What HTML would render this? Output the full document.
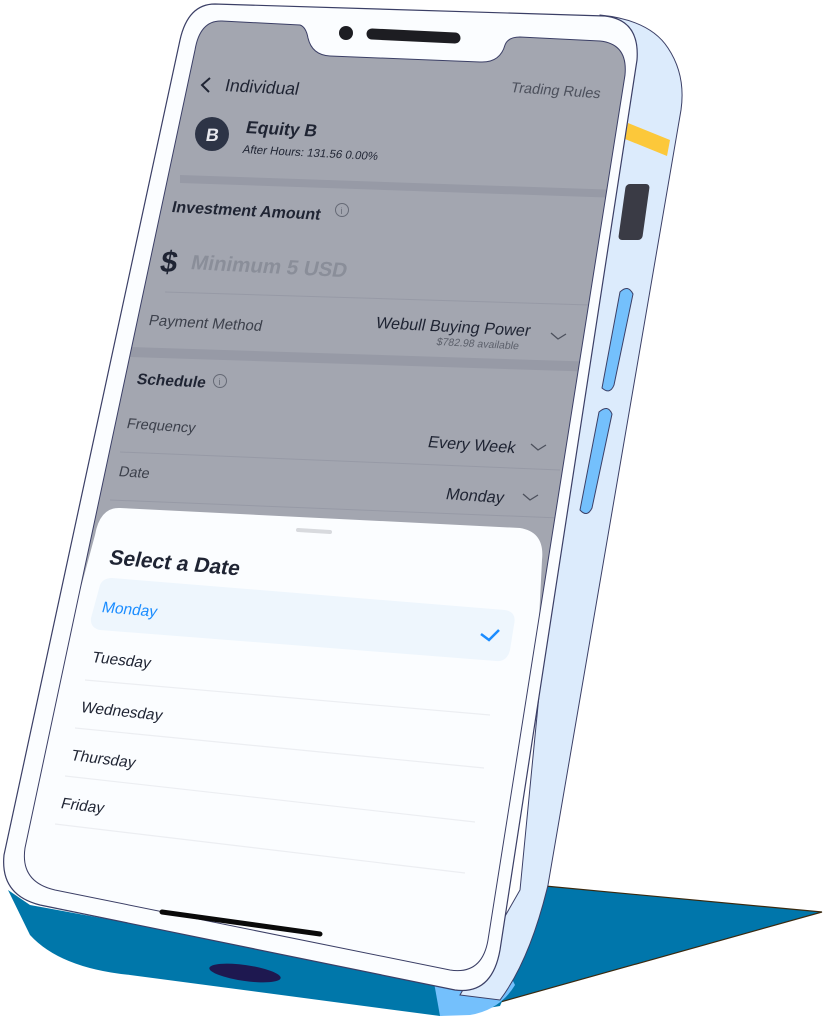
<!DOCTYPE html>
<html><head><meta charset="utf-8"><style>
html,body{margin:0;padding:0;background:#fff;}
svg{display:block;}
text{font-family:"Liberation Sans",sans-serif;}
</style></head><body>
<svg width="824" height="1018" viewBox="0 0 824 1018" xmlns="http://www.w3.org/2000/svg">
<polygon points="545,886 822,912 486,1006 470,960" fill="#0076ab"/>
<polyline points="545,886 822,912 486,1006" fill="none" stroke="#3a2a10" stroke-width="1.2"/>
<path d="M8,890 L30,935 Q60,968 130,975 L440,1016 L500,1006 L520,960 L470,985 L30,905 Z" fill="#0077aa"/>
<path d="M430,960 L500,955 L515,985 Q500,1010 470,1015 L440,1016 Z" fill="#74c0fc"/>
<path d="M600,15 Q650,20 668,48 Q686,75 681,110 L548,885 Q530,960 500,1000 L460,995 L520,890 L600,70 Z" fill="#dcebfc" stroke="#3b3f66" stroke-width="1"/>
<polygon points="628,123 670,140 667,156 625,139" fill="#fcc83a"/>
<rect x="622" y="184" width="24" height="56" rx="4" fill="#3a3b45" transform="skewX(-8)" transform-origin="634 212"/>
<path d="M620,292 Q628,284 633,294 L614,385 Q610,395 602,388 Z" fill="#74c0fc" stroke="#3b3f66" stroke-width="1"/>
<path d="M599,412 Q608,404 612,414 L592,508 Q587,518 580,510 Z" fill="#74c0fc" stroke="#3b3f66" stroke-width="1"/>
<path d="M215,4 L605,16 Q640,20 637,60 L500,950 Q492,995 455,990 L40,905 Q0,895 4,855 L180,40 Q188,4 215,4 Z" fill="#fbfdff" stroke="#3b3f66" stroke-width="1.2"/>
<clipPath id="scr"><path d="M222,21 L300,25 Q306,27 308,38 Q312,55 330,56 L480,62 Q500,63 505,45 Q508,37 520,37 L600,41 Q628,44 625,75 L488,940 Q482,975 450,970 L55,890 Q20,882 25,848 L195,50 Q200,20 222,21 Z"/></clipPath>
<g clip-path="url(#scr)">
<rect x="0" y="0" width="824" height="1018" fill="#a3a6b0"/>
<polygon points="180,175 620,190 620,198 180,183" fill="#979aa6"/>
<polygon points="130,347 600,362 600,372 130,357" fill="#979aa6"/>
<line x1="165" y1="292" x2="590" y2="305" stroke="#979aa6" stroke-width="1"/>
<line x1="120" y1="452" x2="560" y2="470" stroke="#979aa6" stroke-width="1"/>
<line x1="110" y1="500" x2="560" y2="518" stroke="#979aa6" stroke-width="1"/>
<path d="M120,508 L520,528 Q545,532 542,560 L520,1000 L-30,1000 L95,535 Q100,507 120,508 Z" fill="#fbfdff"/>
<path d="M100,585 Q103,578 112,578 L505,610 Q517,612 514,625 L510,650 Q507,662 496,661 L100,630 Q90,628 91,618 Z" fill="#eef6fd"/>
<line x1="85" y1="680" x2="490" y2="715" stroke="#eceef2" stroke-width="1.2"/>
<line x1="75" y1="728" x2="484" y2="768" stroke="#eceef2" stroke-width="1.2"/>
<line x1="65" y1="776" x2="475" y2="822" stroke="#eceef2" stroke-width="1.2"/>
<line x1="55" y1="824" x2="465" y2="873" stroke="#eceef2" stroke-width="1.2"/>
</g>
<path d="M222,21 L300,25 Q306,27 308,38 Q312,55 330,56 L480,62 Q500,63 505,45 Q508,37 520,37 L600,41 Q628,44 625,75 L488,940 Q482,975 450,970 L55,890 Q20,882 25,848 L195,50 Q200,20 222,21 Z" fill="none" stroke="#3b3f66" stroke-width="1"/>
<circle cx="346" cy="33" r="7" fill="#1d1d22"/>
<line x1="372" y1="34" x2="455" y2="38" stroke="#1d1d22" stroke-width="11" stroke-linecap="round"/>
<line x1="298" y1="530" x2="330" y2="532" stroke="#d8dade" stroke-width="4" stroke-linecap="round"/>
<line x1="162" y1="912" x2="320" y2="934" stroke="#0a0a0a" stroke-width="5" stroke-linecap="round"/>
<ellipse cx="245" cy="973" rx="36" ry="8" fill="#1e1850" transform="rotate(8 245 973)"/>

<g fill="#1f2433">
<path d="M210,78 L202,85 L209,92" fill="none" stroke="#1f2433" stroke-width="2"/>
<text transform="translate(224,91) rotate(3) skewX(-10)" font-size="17.5">Individual</text>
<text transform="translate(510,92) rotate(4) skewX(-10)" font-size="14.5" fill="#4c505c">Trading Rules</text>
<circle cx="212" cy="134" r="17" fill="#2d3446"/>
<text transform="translate(205,141) skewX(-10)" font-size="18" font-weight="bold" fill="#e8e9ee">B</text>
<text transform="translate(245,133) rotate(3) skewX(-10)" font-size="17.5" font-weight="bold">Equity B</text>
<text transform="translate(242,153) rotate(3) skewX(-10)" font-size="11.5">After Hours: 131.56 0.00%</text>
<text transform="translate(171,212) rotate(3) skewX(-10)" font-size="16" font-weight="bold">Investment Amount</text>
<circle cx="342" cy="210" r="6.5" fill="none" stroke="#666a76" stroke-width="1"/>
<text x="340.5" y="214" font-size="9" fill="#666a76">i</text>
<text transform="translate(159,272) skewX(-10)" font-size="30" font-weight="bold">$</text>
<text transform="translate(190,269) rotate(3) skewX(-10)" font-size="20.5" font-weight="bold" fill="#8a8e99">Minimum 5 USD</text>
<text transform="translate(148,325) rotate(3) skewX(-10)" font-size="15" fill="#3c404b">Payment Method</text>
<text transform="translate(375,328) rotate(3) skewX(-10)" font-size="16.3">Webull Buying Power</text>
<text transform="translate(436,345) rotate(3) skewX(-10)" font-size="10.5" fill="#5c606b">$782.98 available</text>
<path d="M551,333 L558,339 L566,334" fill="none" stroke="#4c505c" stroke-width="1.3"/>
<text transform="translate(136,384) rotate(3) skewX(-10)" font-size="15.5" font-weight="bold">Schedule</text>
<circle cx="220" cy="381" r="6.5" fill="none" stroke="#666a76" stroke-width="1"/>
<text x="218.5" y="385" font-size="9" fill="#666a76">i</text>
<text transform="translate(126,428) rotate(4) skewX(-10)" font-size="14.5" fill="#3c404b">Frequency</text>
<text transform="translate(427,447) rotate(4) skewX(-10)" font-size="16.3">Every Week</text>
<path d="M531,444 L538,450 L546,445" fill="none" stroke="#4c505c" stroke-width="1.3"/>
<text transform="translate(118,476) rotate(4) skewX(-10)" font-size="14.5" fill="#3c404b">Date</text>
<text transform="translate(445,499) rotate(4) skewX(-10)" font-size="16.3">Monday</text>
<path d="M523,494 L530,500 L538,495" fill="none" stroke="#4c505c" stroke-width="1.3"/>
<text transform="translate(108,564) rotate(5) skewX(-10)" font-size="21" font-weight="bold">Select a Date</text>
<text transform="translate(101,612) rotate(5) skewX(-10)" font-size="15.5" fill="#1a8cff">Monday</text>
<path d="M481,634 L489,640 L499,630" fill="none" stroke="#1a8cff" stroke-width="2.5"/>
<text transform="translate(91,662) rotate(6) skewX(-10)" font-size="15.5">Tuesday</text>
<text transform="translate(80,712) rotate(6) skewX(-10)" font-size="15.5">Wednesday</text>
<text transform="translate(70,760) rotate(7) skewX(-10)" font-size="15.5">Thursday</text>
<text transform="translate(60,808) rotate(7) skewX(-10)" font-size="15.5">Friday</text>
</g>
</svg>
</body></html>
